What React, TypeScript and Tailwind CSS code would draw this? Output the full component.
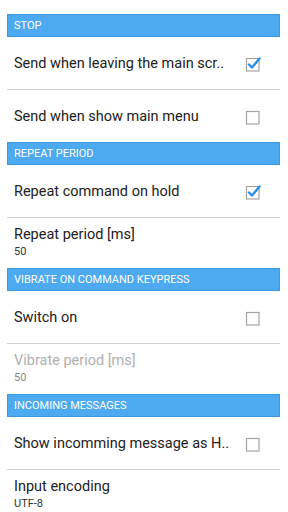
import React from "react";

const Header = ({ title }: { title: string }) => (
  <div className="h-[23px] flex items-center bg-[#4eaaf0] border border-[#3b9ae8] px-[6px] text-[11px] text-white uppercase leading-none">
    {title}
  </div>
);

const Check = ({ checked }: { checked: boolean }) => (
  <svg width="18" height="18" viewBox="0 0 18 18" className="shrink-0">
    <rect x="2.5" y="3.5" width="12.5" height="12.5" fill="none" stroke="#a3a3a3" strokeWidth="1.2" />
    {checked && (
      <path d="M5 9.5 L8 12.5 L15.5 3.5" fill="none" stroke="#2a8ef0" strokeWidth="2.4" strokeLinecap="round" strokeLinejoin="round" />
    )}
  </svg>
);

const CheckRow = ({ title, checked }: { title: string; checked: boolean }) => (
  <div className="h-[52px] flex items-center justify-between pl-[7px] pr-[18px] pt-[2px]">
    <span className="text-[14.5px] text-[#212121] truncate">{title}</span>
    <Check checked={checked} />
  </div>
);

const ValueRow = ({ title, value, disabled }: { title: string; value: string; disabled?: boolean }) => (
  <div className="h-[50px] flex flex-col pl-[7px] pt-[8px]">
    <span className={"text-[14.5px] leading-[18px] " + (disabled ? "text-[#b0b0b0]" : "text-[#212121]")}>{title}</span>
    <span className={"text-[11px] leading-[16px] " + (disabled ? "text-[#8a8a8a]" : "text-[#333333]")}>{value}</span>
  </div>
);

const Divider = () => <div className="h-px bg-[#d2d2d2]" />;

export default function App() {
  return (
    <div className="w-[288px] h-[512px] overflow-hidden bg-white pt-[14px] pl-[7px] pr-[8px]" style={{ fontFamily: "Roboto, 'Liberation Sans', sans-serif" }}>
      <Header title="Stop" />
      <CheckRow title="Send when leaving the main scr.." checked />
      <Divider />
      <CheckRow title="Send when show main menu" checked={false} />
      <Header title="Repeat period" />
      <CheckRow title="Repeat command on hold" checked />
      <Divider />
      <ValueRow title="Repeat period [ms]" value="50" />
      <Header title="Vibrate on command keypress" />
      <CheckRow title="Switch on" checked={false} />
      <Divider />
      <ValueRow title="Vibrate period [ms]" value="50" disabled />
      <Header title="Incoming messages" />
      <CheckRow title="Show incomming message as H.." checked={false} />
      <Divider />
      <ValueRow title="Input encoding" value="UTF-8" />
    </div>
  );
}
